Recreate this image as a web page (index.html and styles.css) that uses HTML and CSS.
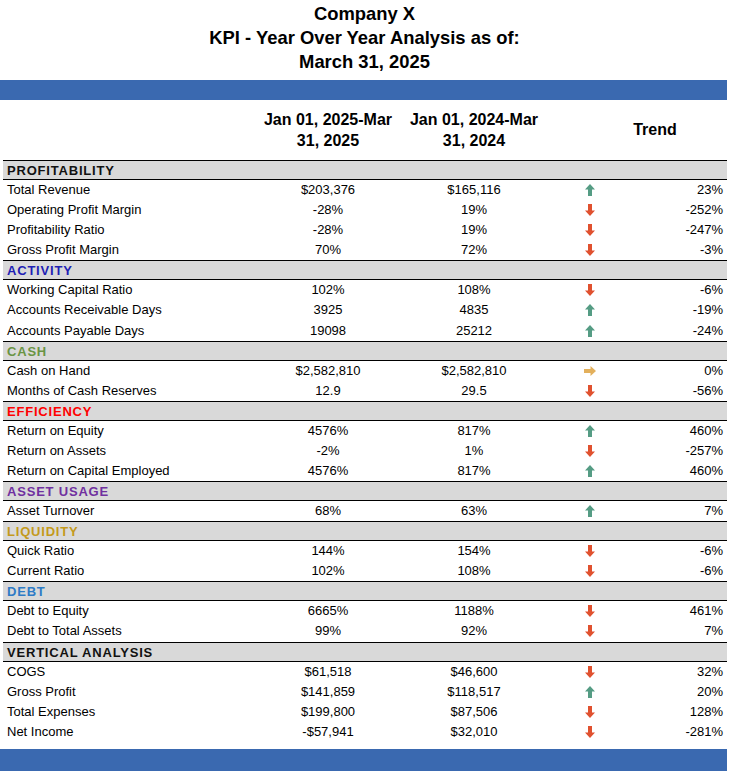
FILE: index.html
```html
<!DOCTYPE html>
<html>
<head>
<meta charset="utf-8">
<link rel="stylesheet" href="styles.css">
</head>
<body>
<div class="title">
  <div>Company X</div>
  <div>KPI - Year Over Year Analysis as of:</div>
  <div>March 31, 2025</div>
</div>
<div class="bar"></div>
<div class="sheet">
  <div class="head">
    <div></div>
    <div class="hcell">Jan 01, 2025-Mar<br>31, 2025</div>
    <div class="hcell">Jan 01, 2024-Mar<br>31, 2024</div>
    <div class="hcell trend">Trend</div>
  </div>

  <div class="sec c-black">PROFITABILITY</div>
  <div class="row"><span>Total Revenue</span><span class="v">$203,376</span><span class="v">$165,116</span><span class="a"><svg class="up" viewBox="0 0 10 12" width="10" height="12"><polygon points="5,0 10,5.5 7,5.5 7,12 3,12 3,5.5 0,5.5"/></svg></span><span class="p">23%</span></div>
  <div class="row"><span>Operating Profit Margin</span><span class="v">-28%</span><span class="v">19%</span><span class="a"><svg class="down" viewBox="0 0 10 12" width="10" height="12"><polygon points="5,12 10,6.5 7,6.5 7,0 3,0 3,6.5 0,6.5"/></svg></span><span class="p">-252%</span></div>
  <div class="row"><span>Profitability Ratio</span><span class="v">-28%</span><span class="v">19%</span><span class="a"><svg class="down" viewBox="0 0 10 12" width="10" height="12"><polygon points="5,12 10,6.5 7,6.5 7,0 3,0 3,6.5 0,6.5"/></svg></span><span class="p">-247%</span></div>
  <div class="row"><span>Gross Profit Margin</span><span class="v">70%</span><span class="v">72%</span><span class="a"><svg class="down" viewBox="0 0 10 12" width="10" height="12"><polygon points="5,12 10,6.5 7,6.5 7,0 3,0 3,6.5 0,6.5"/></svg></span><span class="p">-3%</span></div>

  <div class="sec c-navy">ACTIVITY</div>
  <div class="row"><span>Working Capital Ratio</span><span class="v">102%</span><span class="v">108%</span><span class="a"><svg class="down" viewBox="0 0 10 12" width="10" height="12"><polygon points="5,12 10,6.5 7,6.5 7,0 3,0 3,6.5 0,6.5"/></svg></span><span class="p">-6%</span></div>
  <div class="row"><span>Accounts Receivable Days</span><span class="v">3925</span><span class="v">4835</span><span class="a"><svg class="up" viewBox="0 0 10 12" width="10" height="12"><polygon points="5,0 10,5.5 7,5.5 7,12 3,12 3,5.5 0,5.5"/></svg></span><span class="p">-19%</span></div>
  <div class="row"><span>Accounts Payable Days</span><span class="v">19098</span><span class="v">25212</span><span class="a"><svg class="up" viewBox="0 0 10 12" width="10" height="12"><polygon points="5,0 10,5.5 7,5.5 7,12 3,12 3,5.5 0,5.5"/></svg></span><span class="p">-24%</span></div>

  <div class="sec c-green">CASH</div>
  <div class="row"><span>Cash on Hand</span><span class="v">$2,582,810</span><span class="v">$2,582,810</span><span class="a"><svg class="right" viewBox="0 0 12 10" width="12" height="10"><polygon points="12,5 6.5,0 6.5,3 0,3 0,7 6.5,7 6.5,10"/></svg></span><span class="p">0%</span></div>
  <div class="row"><span>Months of Cash Reserves</span><span class="v">12.9</span><span class="v">29.5</span><span class="a"><svg class="down" viewBox="0 0 10 12" width="10" height="12"><polygon points="5,12 10,6.5 7,6.5 7,0 3,0 3,6.5 0,6.5"/></svg></span><span class="p">-56%</span></div>

  <div class="sec c-red">EFFICIENCY</div>
  <div class="row"><span>Return on Equity</span><span class="v">4576%</span><span class="v">817%</span><span class="a"><svg class="up" viewBox="0 0 10 12" width="10" height="12"><polygon points="5,0 10,5.5 7,5.5 7,12 3,12 3,5.5 0,5.5"/></svg></span><span class="p">460%</span></div>
  <div class="row"><span>Return on Assets</span><span class="v">-2%</span><span class="v">1%</span><span class="a"><svg class="down" viewBox="0 0 10 12" width="10" height="12"><polygon points="5,12 10,6.5 7,6.5 7,0 3,0 3,6.5 0,6.5"/></svg></span><span class="p">-257%</span></div>
  <div class="row"><span>Return on Capital Employed</span><span class="v">4576%</span><span class="v">817%</span><span class="a"><svg class="up" viewBox="0 0 10 12" width="10" height="12"><polygon points="5,0 10,5.5 7,5.5 7,12 3,12 3,5.5 0,5.5"/></svg></span><span class="p">460%</span></div>

  <div class="sec c-purple">ASSET USAGE</div>
  <div class="row"><span>Asset Turnover</span><span class="v">68%</span><span class="v">63%</span><span class="a"><svg class="up" viewBox="0 0 10 12" width="10" height="12"><polygon points="5,0 10,5.5 7,5.5 7,12 3,12 3,5.5 0,5.5"/></svg></span><span class="p">7%</span></div>

  <div class="sec c-gold">LIQUIDITY</div>
  <div class="row"><span>Quick Ratio</span><span class="v">144%</span><span class="v">154%</span><span class="a"><svg class="down" viewBox="0 0 10 12" width="10" height="12"><polygon points="5,12 10,6.5 7,6.5 7,0 3,0 3,6.5 0,6.5"/></svg></span><span class="p">-6%</span></div>
  <div class="row"><span>Current Ratio</span><span class="v">102%</span><span class="v">108%</span><span class="a"><svg class="down" viewBox="0 0 10 12" width="10" height="12"><polygon points="5,12 10,6.5 7,6.5 7,0 3,0 3,6.5 0,6.5"/></svg></span><span class="p">-6%</span></div>

  <div class="sec c-blue">DEBT</div>
  <div class="row"><span>Debt to Equity</span><span class="v">6665%</span><span class="v">1188%</span><span class="a"><svg class="down" viewBox="0 0 10 12" width="10" height="12"><polygon points="5,12 10,6.5 7,6.5 7,0 3,0 3,6.5 0,6.5"/></svg></span><span class="p">461%</span></div>
  <div class="row"><span>Debt to Total Assets</span><span class="v">99%</span><span class="v">92%</span><span class="a"><svg class="down" viewBox="0 0 10 12" width="10" height="12"><polygon points="5,12 10,6.5 7,6.5 7,0 3,0 3,6.5 0,6.5"/></svg></span><span class="p">7%</span></div>

  <div class="sec c-black">VERTICAL ANALYSIS</div>
  <div class="row"><span>COGS</span><span class="v">$61,518</span><span class="v">$46,600</span><span class="a"><svg class="down" viewBox="0 0 10 12" width="10" height="12"><polygon points="5,12 10,6.5 7,6.5 7,0 3,0 3,6.5 0,6.5"/></svg></span><span class="p">32%</span></div>
  <div class="row"><span>Gross Profit</span><span class="v">$141,859</span><span class="v">$118,517</span><span class="a"><svg class="up" viewBox="0 0 10 12" width="10" height="12"><polygon points="5,0 10,5.5 7,5.5 7,12 3,12 3,5.5 0,5.5"/></svg></span><span class="p">20%</span></div>
  <div class="row"><span>Total Expenses</span><span class="v">$199,800</span><span class="v">$87,506</span><span class="a"><svg class="down" viewBox="0 0 10 12" width="10" height="12"><polygon points="5,12 10,6.5 7,6.5 7,0 3,0 3,6.5 0,6.5"/></svg></span><span class="p">128%</span></div>
  <div class="row"><span>Net Income</span><span class="v">-$57,941</span><span class="v">$32,010</span><span class="a"><svg class="down" viewBox="0 0 10 12" width="10" height="12"><polygon points="5,12 10,6.5 7,6.5 7,0 3,0 3,6.5 0,6.5"/></svg></span><span class="p">-281%</span></div>
</div>
<div class="bar bottom"></div>
</body>
</html>
```
FILE: styles.css
```css
* { box-sizing: border-box; }
html, body { margin: 0; padding: 0; background: #fff; }
body {
  font-family: "Liberation Sans", Arial, sans-serif;
  color: #000;
  overflow: hidden;
}
.title {
  padding-top: 2px;
  text-align: center;
  font-weight: bold;
  font-size: 18.4px;
  line-height: 24px;
  height: 80px;
}
.bar {
  height: 20px;
  margin-right: 2px;
  background: #3a69b0;
}
.bar.bottom {
  margin-top: 7px;
  height: 24px;
}
.sheet {
  margin-left: 3px;
  margin-right: 2px;
}
.head, .row {
  display: grid;
  grid-template-columns: 252px 146px 146px 86px 94px;
}
.head {
  height: 60px;
  align-items: center;
  padding-bottom: 1px;
}
.hcell {
  text-align: center;
  font-weight: bold;
  font-size: 16px;
  line-height: 21px;
}
.hcell.trend {
  grid-column: 4 / 6;
  padding-left: 36px;
}
.row {
  height: 20.07px;
  font-size: 13px;
  line-height: 20px;
  align-items: center;
}
.row > span:first-child { padding-left: 4px; white-space: nowrap; }
.v { text-align: center; }
.a { display: flex; justify-content: center; align-items: center; height: 20px; }
.p { text-align: right; padding-right: 4px; }
.up { fill: #559c84; }
.down { fill: #e0512f; }
.right { fill: #e3b05c; }
.sec {
  height: 20.07px;
  background: #d9d9d9;
  border-top: 1px solid #000;
  border-bottom: 1px solid #000;
  padding-left: 4px;
  font-size: 13px;
  font-weight: bold;
  letter-spacing: 0.8px;
  line-height: 19px;
}
.c-black { color: #111; }
.c-navy { color: #1f1fb4; }
.c-green { color: #6a9444; }
.c-red { color: #ff0000; }
.c-purple { color: #7030a0; }
.c-gold { color: #c49a1c; }
.c-blue { color: #2e7bc6; }
```
